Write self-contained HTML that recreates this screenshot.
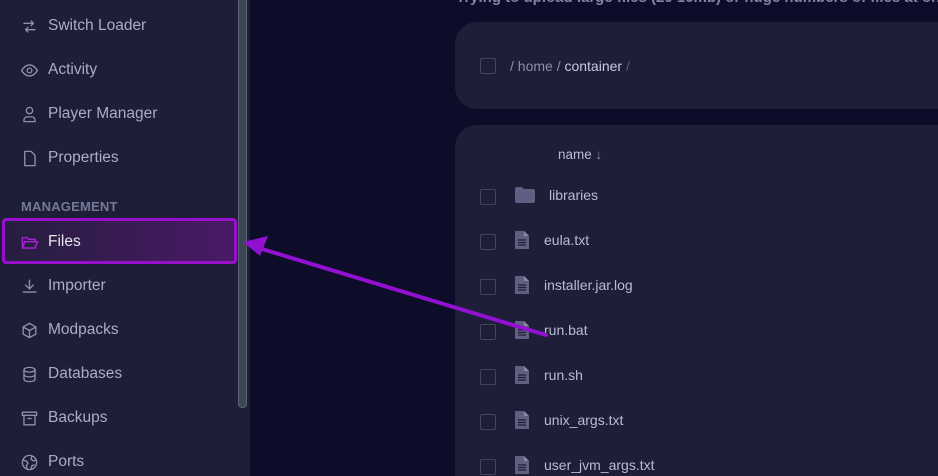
<!DOCTYPE html>
<html><head><meta charset="utf-8"><style>
*{margin:0;padding:0;box-sizing:border-box}
html,body{width:938px;height:476px;overflow:hidden}
body{background:#0d0d29;font-family:"Liberation Sans",sans-serif;position:relative}
.sb{position:absolute;left:0;top:0;width:250px;height:476px;background:#1e1e36}
.scroll{position:absolute;left:238px;top:-4px;width:9px;height:412px;background:#3d4655;border:1px solid #5a6475;border-radius:4px}
.it{position:absolute;left:20px;height:20px;display:flex;align-items:center;color:#a9aec8;font-size:15.5px}
.it svg{width:19px;height:19px;flex:0 0 19px;margin-right:9px;fill:none;stroke:#8c91ad;stroke-width:1.7;stroke-linecap:round;stroke-linejoin:round}
.mg{position:absolute;left:21px;top:199px;font-size:13px;font-weight:bold;color:#737a99;letter-spacing:.2px}
.files{position:absolute;left:2px;top:218px;width:235px;height:46px;border:3px solid #9810cc;border-radius:4px;background:linear-gradient(90deg,#261e40,#4a1966)}
.card{position:absolute;left:455px;width:520px;background:#1e1e38;border-radius:22px}
.cb{position:absolute;left:480px;width:16px;height:16px;border:1.5px solid #41425c;border-radius:2px}
.fn{position:absolute;color:#b8bcd6;font-size:14px}
.fi{position:absolute;left:515px}
.top{position:absolute;left:456px;top:-11px;color:#7f85a8;font-size:15px;font-weight:bold;white-space:nowrap}
</style></head><body>
<div class="top">Trying to upload large files (20 10mb) or huge numbers of files at once</div>
<div class="sb">
<div class="it" style="top:16px"><svg viewBox="0 0 24 24"><path d="M7 16H19M7 16l3-3M7 16l3 3M17 8H5M17 8l-3-3M17 8l-3 3"/></svg>Switch Loader</div>
<div class="it" style="top:60px"><svg viewBox="0 0 24 24"><path d="M2 12s4-7 10-7 10 7 10 7-4 7-10 7S2 12 2 12z"/><circle cx="12" cy="12" r="3"/></svg>Activity</div>
<div class="it" style="top:104px"><svg viewBox="0 0 24 24"><circle cx="12" cy="7" r="4"/><path d="M5 21v-2a4 4 0 014-4h6a4 4 0 014 4v2z"/></svg>Player Manager</div>
<div class="it" style="top:148px"><svg viewBox="0 0 24 24"><path d="M6 3h8l5 5v13H6z"/></svg>Properties</div>
<div class="mg">MANAGEMENT</div>
<div class="files"></div>
<div class="it" style="top:232px;color:#e6e6f0"><svg viewBox="0 0 24 24" style="stroke:#b020e0"><path d="M3 19V6h6l2 2h8v3M3 19l3-8h16l-3 8z"/></svg>Files</div>
<div class="it" style="top:276px"><svg viewBox="0 0 24 24"><path d="M12 4v11M7 10l5 5 5-5M4 19h16"/></svg>Importer</div>
<div class="it" style="top:320px"><svg viewBox="0 0 24 24"><path d="M12 3l8 4.5v9L12 21l-8-4.5v-9zM4 7.5l8 4.5 8-4.5M12 12v9"/></svg>Modpacks</div>
<div class="it" style="top:364px"><svg viewBox="0 0 24 24"><ellipse cx="12" cy="6" rx="7" ry="3"/><path d="M5 6v12c0 1.7 3 3 7 3s7-1.3 7-3V6M5 12c0 1.7 3 3 7 3s7-1.3 7-3"/></svg>Databases</div>
<div class="it" style="top:408px"><svg viewBox="0 0 24 24"><path d="M3 4h18v4H3zM5 8v12h14V8M10 12h4"/></svg>Backups</div>
<div class="it" style="top:452px"><svg viewBox="0 0 24 24"><circle cx="12" cy="12" r="9"/><path d="M4 9l4 1 2 3-2 3 1 4M15 4l-1 4 3 2 3-1M14 20l1-4 3-1"/></svg>Ports</div>
<div class="scroll"></div>
</div>
<div class="card" style="top:22px;height:87px"></div>
<div class="cb" style="top:58px"></div>
<div class="fn" style="left:510px;top:58px;color:#8a8fab">/ home / <span style="color:#c8cbe0">container</span> <span style="color:#5a5e7a">/</span></div>
<div class="card" style="top:125px;height:351px;border-radius:22px 22px 0 0"></div>
<div class="fn" style="left:558px;top:147px;font-size:13.5px">name <span style="color:#8a8fab">↓</span></div>
<div class="cb" style="top:189px"></div>
<svg class="fi" style="top:187px" width="20" height="16" viewBox="0 0 20 16"><path d="M0 2a2 2 0 012-2h5l2 2h9a2 2 0 012 2v10a2 2 0 01-2 2H2a2 2 0 01-2-2z" fill="#5f5f82"/></svg>
<div class="fn" style="left:549px;top:187px">libraries</div>
<div class="cb" style="top:234px"></div><svg class="fi" style="top:231px" width="14" height="18" viewBox="0 0 14 18"><path d="M0 0h9l5 5v13H0z" fill="#5f5f82"/><path d="M9 0v5h5" fill="#8a8aa8"/><path d="M3 9h8M3 11.5h8M3 14h8" stroke="#1e1e38" stroke-width="1.2"/></svg><div class="fn" style="left:544px;top:232px">eula.txt</div>
<div class="cb" style="top:279px"></div><svg class="fi" style="top:276px" width="14" height="18" viewBox="0 0 14 18"><path d="M0 0h9l5 5v13H0z" fill="#5f5f82"/><path d="M9 0v5h5" fill="#8a8aa8"/><path d="M3 9h8M3 11.5h8M3 14h8" stroke="#1e1e38" stroke-width="1.2"/></svg><div class="fn" style="left:544px;top:277px">installer.jar.log</div>
<div class="cb" style="top:324px"></div><svg class="fi" style="top:321px" width="14" height="18" viewBox="0 0 14 18"><path d="M0 0h9l5 5v13H0z" fill="#5f5f82"/><path d="M9 0v5h5" fill="#8a8aa8"/><path d="M3 9h8M3 11.5h8M3 14h8" stroke="#1e1e38" stroke-width="1.2"/></svg><div class="fn" style="left:544px;top:322px">run.bat</div>
<div class="cb" style="top:369px"></div><svg class="fi" style="top:366px" width="14" height="18" viewBox="0 0 14 18"><path d="M0 0h9l5 5v13H0z" fill="#5f5f82"/><path d="M9 0v5h5" fill="#8a8aa8"/><path d="M3 9h8M3 11.5h8M3 14h8" stroke="#1e1e38" stroke-width="1.2"/></svg><div class="fn" style="left:544px;top:367px">run.sh</div>
<div class="cb" style="top:414px"></div><svg class="fi" style="top:411px" width="14" height="18" viewBox="0 0 14 18"><path d="M0 0h9l5 5v13H0z" fill="#5f5f82"/><path d="M9 0v5h5" fill="#8a8aa8"/><path d="M3 9h8M3 11.5h8M3 14h8" stroke="#1e1e38" stroke-width="1.2"/></svg><div class="fn" style="left:544px;top:412px">unix_args.txt</div>
<div class="cb" style="top:459px"></div><svg class="fi" style="top:456px" width="14" height="18" viewBox="0 0 14 18"><path d="M0 0h9l5 5v13H0z" fill="#5f5f82"/><path d="M9 0v5h5" fill="#8a8aa8"/><path d="M3 9h8M3 11.5h8M3 14h8" stroke="#1e1e38" stroke-width="1.2"/></svg><div class="fn" style="left:544px;top:457px">user_jvm_args.txt</div>
<svg style="position:absolute;left:0;top:0" width="938" height="476"><line x1="546" y1="335" x2="262" y2="249" stroke="#9210d0" stroke-width="4" stroke-linecap="round"/><path d="M243 242L268 236L260 256Z" fill="#9210d0"/></svg>
</body></html>
